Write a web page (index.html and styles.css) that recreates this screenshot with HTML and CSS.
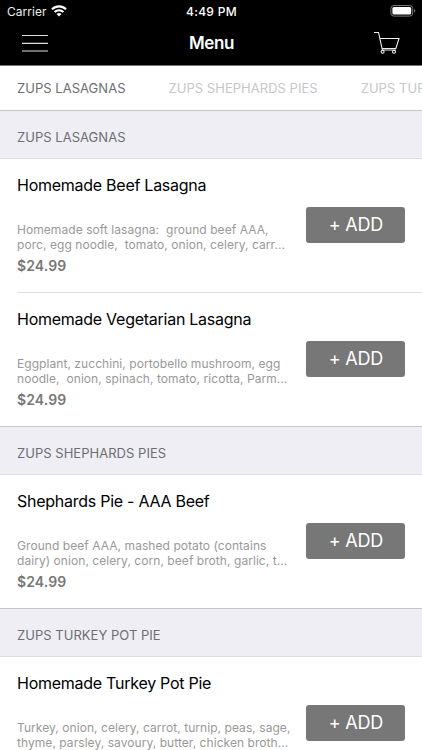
FILE: index.html
```html
<!DOCTYPE html>
<html lang="en">
<head>
<meta charset="utf-8">
<title>Menu</title>
<link rel="stylesheet" href="styles.css">
</head>
<body>
<header class="header">
  <div class="status">
    <div class="carrier"><span>Carrier</span>
      <svg class="wifi" width="16" height="12" viewBox="0 0 16 12" fill="none" stroke="#fff" stroke-width="2.1"><path d="M1 4.3C5 .4 11 .4 15 4.3M3.6 7C6.1 4.6 9.900 4.6 12.400 7"/><path d="M8 11.400 5.500 8.900Q8 7 10.500 8.900Z" fill="#fff" stroke="none"/></svg>
    </div>
    <time class="time">4:49 PM</time>
    <svg class="battery" width="26" height="13" viewBox="0 0 26 13"><rect x=".9" y=".5" width="21.800" height="10.600" rx="3" fill="none" stroke="#777"/><rect x="2.400" y="2" width="18.800" height="7.600" rx="1.500" fill="#fff"/><path d="M24 4q1.300.5 1.300 1.800T24 7.600z" fill="#777"/></svg>
  </div>
  <nav class="navbar">
    <svg class="burger" width="26" height="20" viewBox="0 0 26 20"><path d="M0 1.500h26M0 9.300h26M0 17h26" stroke="#ddd" stroke-width="1.200"/></svg>
    <h1 class="nav-title">Menu</h1>
    <svg class="cart" width="28" height="24" viewBox="0 0 28 24" fill="none" stroke="#eee" stroke-width="1.100"><path d="M1 .5h4.500L9.400 18H23M6.900 6.500H26L22.900 16.500H9"/><circle cx="9.600" cy="19.700" r="1.500"/><circle cx="21" cy="19.700" r="1.500"/></svg>
  </nav>
</header>
<div class="tabs"><span class="tab active">ZUPS LASAGNAS</span><span class="tab">ZUPS SHEPHARDS PIES</span><span class="tab">ZUPS TURKEY POT PIE</span></div>
<main>
  <h2 class="section">ZUPS LASAGNAS</h2>
  <article class="item divided">
    <div class="info"><h3 class="name">Homemade Beef Lasagna</h3><p class="desc">Homemade soft lasagna:&nbsp; ground beef AAA,<br>porc, egg noodle,&nbsp; tomato, onion, celery, carr...</p><div class="price">$24.99</div></div>
    <button class="add">+ ADD</button>
  </article>
  <article class="item">
    <div class="info"><h3 class="name">Homemade Vegetarian Lasagna</h3><p class="desc">Eggplant, zucchini, portobello mushroom, egg<br>noodle,&nbsp; onion, spinach, tomato, ricotta, Parm...</p><div class="price">$24.99</div></div>
    <button class="add">+ ADD</button>
  </article>
  <h2 class="section">ZUPS SHEPHARDS PIES</h2>
  <article class="item">
    <div class="info"><h3 class="name">Shephards Pie - AAA Beef</h3><p class="desc">Ground beef AAA, mashed potato (contains<br>dairy) onion, celery, corn, beef broth, garlic, t...</p><div class="price">$24.99</div></div>
    <button class="add">+ ADD</button>
  </article>
  <h2 class="section">ZUPS TURKEY POT PIE</h2>
  <article class="item">
    <div class="info"><h3 class="name">Homemade Turkey Pot Pie</h3><p class="desc">Turkey, onion, celery, carrot, turnip, peas, sage,<br>thyme, parsley, savoury, butter, chicken broth...</p><div class="price">$24.99</div></div>
    <button class="add">+ ADD</button>
  </article>
</main>
</body>
</html>
```
FILE: styles.css
```css
* { box-sizing: border-box; margin: 0; padding: 0; }
body { width: 422px; height: 750px; overflow: hidden; background: #fff; color: #000; font-family: Inter, "Liberation Sans", sans-serif; }
.header { height: 66px; background: #000; color: #fff; border-bottom: 1px solid #777; }
.status { display: grid; grid-template-columns: 1fr auto 1fr; align-items: center; height: 22px; padding: 0 6px 0 7px; }
.carrier { display: flex; align-items: center; gap: 4px; font-size: 12px; letter-spacing: .05px; color: #eee; }
.time { font-size: 12px; font-weight: 500; letter-spacing: .3px; }
.battery { justify-self: end; }
.navbar { display: grid; grid-template-columns: 1fr auto 1fr; align-items: center; height: 43px; padding: 0 21px 0 22px; }
.nav-title { font-size: 17px; line-height: 22px; font-weight: 600; letter-spacing: -.35px; margin-top: -1px; }
.cart { justify-self: end; }
.tabs { display: flex; gap: 43px; height: 44px; padding-left: 17px; align-items: center; overflow: hidden; }
.tab { flex: none; font-size: 13px; letter-spacing: .03px; white-space: nowrap; color: #c7c7ca; }
.tab.active { color: #6e6e72; }
.section { height: 49px; padding: 3px 0 0 17px; background: #efeef5; border-top: 1px solid #c5c5ca; border-bottom: 1px solid #dedee3; font-size: 13px; letter-spacing: .03px; line-height: 47px; font-weight: 400; color: #6e6e72; }
.item { display: flex; justify-content: space-between; height: 133px; padding: 16px 16.600px 0 0; margin-left: 17px; }
.item.divided { height: 134px; border-bottom: 1px solid #dedee0; }
.info { white-space: nowrap; }
.name { font-size: 16px; line-height: 20px; font-weight: 400; letter-spacing: -.26px; }
.desc { margin-top: 28.400px; font-size: 12px; line-height: 14.300px; letter-spacing: .06px; color: #999; }
.price { margin-top: 5px; font-size: 14px; line-height: 18px; font-weight: 600; letter-spacing: .1px; color: #777; }
.add { flex: none; width: 99px; height: 36px; margin-top: 32px; border: 0; border-radius: 3px; background: #777; color: #fff; font: 400 18px/36px Inter, sans-serif; letter-spacing: -.2px; }
```
